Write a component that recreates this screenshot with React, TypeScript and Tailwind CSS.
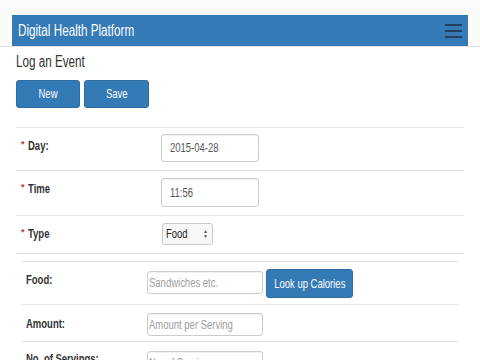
const font = "font-['Liberation_Sans',Arial,sans-serif]";
// the reference text is set in a condensed face; squeeze the glyphs horizontally
const nl = "inline-block origin-left scale-x-[0.73] whitespace-nowrap";
const nc = "inline-block scale-x-[0.73] whitespace-nowrap";
const btn = "flex items-center justify-center rounded-[3px] bg-[#337ab7] border border-[#2e6da4] text-white text-[13px]";

function Req() {
  return <span className="text-[#c9302c] text-[9px] mr-[3px] relative -top-[3px]">*</span>;
}

function Input({ value, placeholder, w, h }: { value?: string; placeholder?: string; w: string; h: string }) {
  return (
    <div className={`${w} ${h} border border-[#ccc] rounded-[3px] flex items-center overflow-hidden text-[13px] shadow-[inset_0_1px_1px_rgba(0,0,0,0.06)] ${value ? "px-[8px] text-[#555]" : "px-[1px] text-[#a0a0a0]"}`}>
      <span className={nl}>{value ?? placeholder}</span>
    </div>
  );
}

export default function App() {
  return (
    <div className={`w-[480px] h-[360px] overflow-hidden bg-white text-[#333] ${font}`}>
      {/* top bar */}
      <div className="pt-[15px] px-[12px] border-b border-[#e3e3e3] bg-[#fbfbfb]">
        <div className="h-[31px] bg-[#337ab7] flex items-center justify-between pl-[6px] pr-[6px]">
          <span className={`${nl} text-white text-[16px] leading-none`}>Digital Health Platform</span>
          <div className="flex flex-col gap-[4px]">
            <span className="block w-[17px] h-[2px] bg-[#23405e]" />
            <span className="block w-[17px] h-[2px] bg-[#23405e]" />
            <span className="block w-[17px] h-[2px] bg-[#23405e]" />
          </div>
        </div>
      </div>

      <div className="px-[16px]">
        <h1 className="text-[16px] leading-none mt-[7px]"><span className={nl}>Log an Event</span></h1>
        <div className="flex gap-[4px] mt-[10px]">
          <button className={`${btn} w-[64px] h-[28px]`}><span className={nc}>New</span></button>
          <button className={`${btn} w-[65px] h-[28px]`}><span className={nc}>Save</span></button>
        </div>

        <div className="mt-[19px] border-t border-[#e5e5e5]">
          <div className="flex h-[43px] border-b border-[#e5e5e5]">
            <div className="w-[145px] pl-[5px] pt-[8px] text-[13px] font-bold"><Req /><span className={nl}>Day:</span></div>
            <div className="pt-[6px]">
              <Input value="2015-04-28" w="w-[98px]" h="h-[28px]" />
            </div>
          </div>
          <div className="flex h-[45px] border-b border-[#e5e5e5]">
            <div className="w-[145px] pl-[5px] pt-[8px] text-[13px] font-bold"><Req /><span className={nl}>Time</span></div>
            <div className="pt-[7px]">
              <Input value="11:56" w="w-[98px]" h="h-[29px]" />
            </div>
          </div>
          <div className="flex h-[38px] border-b border-[#e5e5e5]">
            <div className="w-[146px] pl-[5px] pt-[8px] text-[13px] font-bold"><Req /><span className={nl}>Type</span></div>
            <div className="pt-[7px]">
              <div className="w-[51px] h-[22px] border border-[#c8c8c8] rounded-[3px] bg-[#f7f7f7] flex items-center justify-between pl-[3px] pr-[4px] text-[13px] text-[#222]">
                <span className={nl}>Food</span>
                <span className="flex flex-col text-[5px] leading-[5px] text-[#555]"><span>▲</span><span>▼</span></span>
              </div>
            </div>
          </div>
        </div>

        <div className="mx-[5px] mt-[7px] border-t border-[#e5e5e5]">
          <div className="flex h-[43px] border-b border-[#e5e5e5]">
            <div className="w-[126px] pl-[5px] pt-[8px] text-[13px] font-bold"><span className={nl}>Food:</span></div>
            <div className="pt-[9px] flex items-start gap-[3px]">
              <Input placeholder="Sandwiches etc." w="w-[116px]" h="h-[23px]" />
              <button className={`${btn} -mt-[2px] w-[87px] h-[29px]`}><span className={nc}>Look up Calories</span></button>
            </div>
          </div>
          <div className="flex h-[37px] border-b border-[#e5e5e5]">
            <div className="w-[126px] pl-[5px] pt-[9px] text-[13px] font-bold"><span className={nl}>Amount:</span></div>
            <div className="pt-[8px]">
              <Input placeholder="Amount per Serving" w="w-[116px]" h="h-[23px]" />
            </div>
          </div>
          <div className="flex h-[37px]">
            <div className="w-[126px] pl-[5px] pt-[7px] text-[13px] font-bold"><span className={nl}>No. of Servings:</span></div>
            <div className="pt-[9px]">
              <Input placeholder="No. of Servings" w="w-[116px]" h="h-[23px]" />
            </div>
          </div>
        </div>
      </div>
    </div>
  );
}
